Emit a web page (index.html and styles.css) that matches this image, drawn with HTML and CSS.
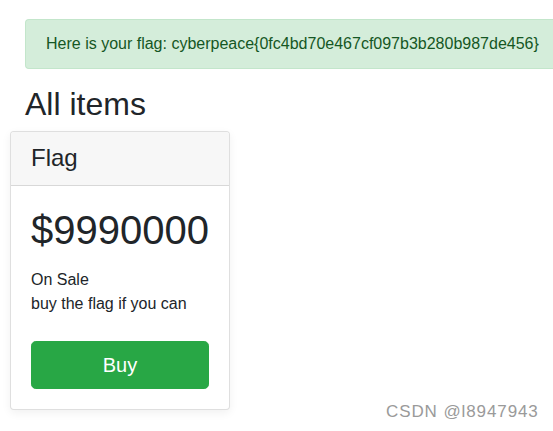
FILE: index.html
```html
<!DOCTYPE html>
<html>
<head>
<meta charset="utf-8">
<link rel="stylesheet" href="styles.css">
</head>
<body>
<div class="container">
  <div class="alert">Here is your flag: cyberpeace{0fc4bd70e467cf097b3b280b987de456}</div>
  <h2 class="title">All items</h2>
  <div class="card">
    <div class="card-header"><h4 class="card-name">Flag</h4></div>
    <div class="card-body">
      <h1 class="price">$9990000</h1>
      <p class="desc">On Sale<br>buy the flag if you can</p>
      <button class="btn-buy" type="button">Buy</button>
    </div>
  </div>
</div>
<div class="watermark">CSDN @l8947943</div>
</body>
</html>
```

FILE: styles.css
```css
html, body {
  margin: 0;
  padding: 0;
  overflow: hidden;
  background: #fff;
}
body {
  font-family: "Liberation Sans", Arial, sans-serif;
  font-size: 16px;
  line-height: 1.5;
  color: #212529;
  width: 553px;
  height: 431px;
  position: relative;
}
.container {
  padding: 19px 0 0 25px;
  width: 553px;
  box-sizing: border-box;
  overflow: hidden;
}
.alert {
  padding: 12px 20px;
  background: #d4edda;
  border: 1px solid #c3e6cb;
  border-right: 0;
  color: #155724;
  border-radius: 4px 0 0 4px;
  margin-bottom: 16px;
  line-height: 24px;
  white-space: nowrap;
}
.title {
  font-size: 32px;
  font-weight: 500;
  line-height: 1.2;
  margin: 0 0 8px 0;
}
.card {
  margin: 0 0 20px 0;
  width: 220px;
  box-sizing: border-box;
  border: 1px solid rgba(0,0,0,.125);
  border-radius: 4px;
  background: #fff;
  box-shadow: 0 3px 10px rgba(0,0,0,.06);
  position: relative;
  left: -15px;
}
.card-header {
  background: #f7f7f7;
  border-bottom: 1px solid rgba(0,0,0,.125);
  padding: 12px 20px;
  border-radius: 3px 3px 0 0;
}
.card-name {
  margin: 0;
  font-size: 24px;
  font-weight: 400;
  line-height: 1.2;
}
.card-body {
  padding: 20px;
}
.price {
  margin: 0 0 14px 0;
  font-size: 40px;
  font-weight: 400;
  line-height: 1.2;
}
.desc {
  margin: 0 0 25px 0;
  line-height: 24px;
}
.btn-buy {
  display: block;
  width: 100%;
  height: 48px;
  border: 1px solid #28a745;
  background: #28a745;
  color: #fff;
  font-family: inherit;
  font-size: 20px;
  line-height: 30px;
  border-radius: 4.8px;
  padding: 8px 16px;
}
.watermark {
  position: absolute;
  left: 386px;
  top: 402px;
  font-size: 17px;
  letter-spacing: 0.9px;
  color: #9a9a9a;
  line-height: 20px;
  white-space: nowrap;
}
```
